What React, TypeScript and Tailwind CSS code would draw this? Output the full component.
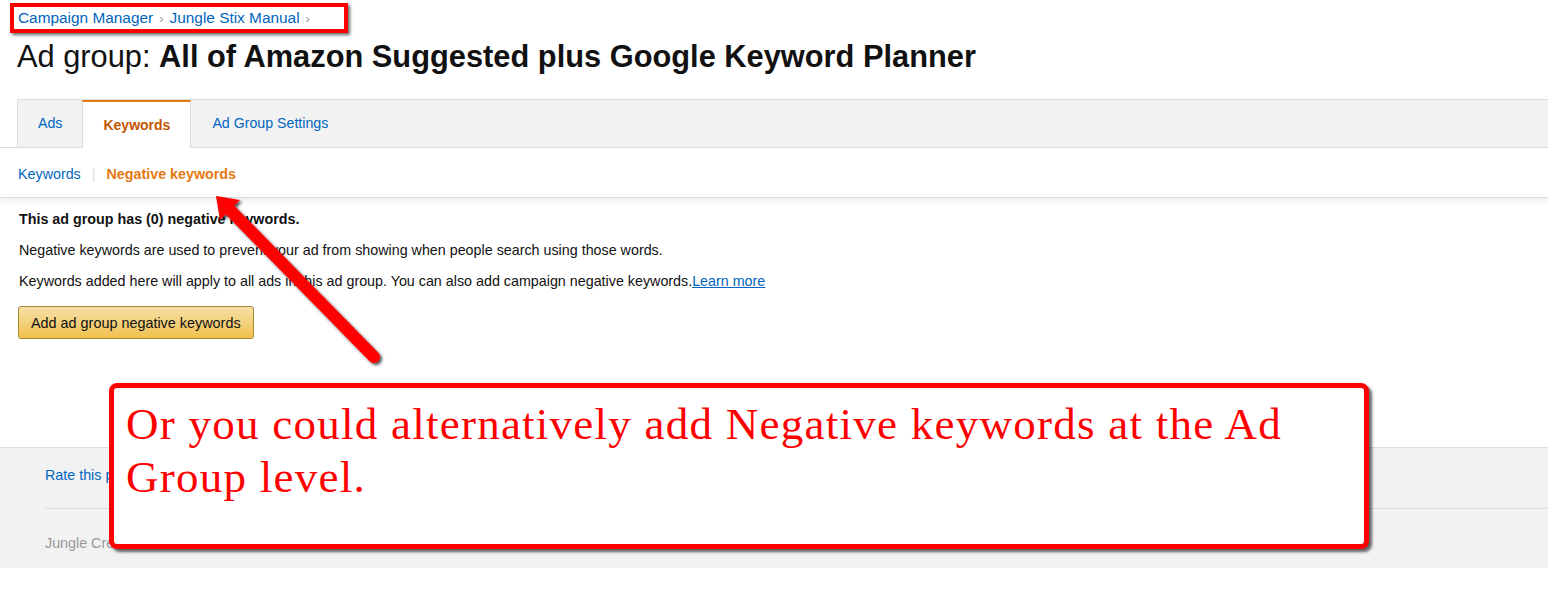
import { ReactNode } from 'react';

function Tab({ label, active, first }: { label: string; active?: boolean; first?: boolean }) {
  if (active) {
    return (
      <div className="h-[48px] -mb-px px-[20px] flex items-center bg-white border-x border-[#dddddd] border-t-2 border-t-[#e47911] text-[14px] font-bold text-[#c45500]">
        {label}
      </div>
    );
  }
  return (
    <div
      className={
        'h-[47px] px-[20px] flex items-center text-[14.2px] text-[#0066c0] ' +
        (first ? 'border-l border-[#dddddd]' : 'pl-[21px]')
      }
    >
      {label}
    </div>
  );
}

function Crumb({ children }: { children: ReactNode }) {
  return (
    <>
      <span className="text-[#0066c0]">{children}</span>
      <span className="text-[#999999] mx-[6px] text-[13px]">›</span>
    </>
  );
}

function App() {
  return (
    <div className="relative min-h-[614px] w-full bg-white font-['Liberation_Sans',Arial,sans-serif] text-[#111111] overflow-hidden">
      <div className="pt-[8px] pl-[18px] h-[28px] leading-[20px] text-[15.4px]">
        <Crumb>Campaign Manager</Crumb>
        <Crumb>Jungle Stix Manual</Crumb>
      </div>

      <h1 className="mt-[12px] pl-[17px] text-[30.8px] leading-[34px] text-[#111111]">
        Ad group: <span className="font-bold">All of Amazon Suggested plus Google Keyword Planner</span>
      </h1>

      <div className="mt-[25px] border-b border-[#dddddd]">
        <div className="ml-[17px] flex items-end bg-[#f2f2f2] border-t border-[#dddddd]">
          <Tab label="Ads" first />
          <Tab label="Keywords" active />
          <Tab label="Ad Group Settings" />
        </div>
      </div>

      <div className="h-[50px] pl-[18px] pt-[16px] leading-[20px] text-[14.3px] flex items-start border-b border-[#dddddd] shadow-[0_3px_6px_rgba(0,0,0,0.07)]">
        <span className="text-[#0066c0]">Keywords</span>
        <span className="mx-[11px] text-[#dddddd]">|</span>
        <span className="font-bold text-[#e47911]">Negative keywords</span>
      </div>

      <div className="pl-[19px] pt-[11px] text-[14.3px] leading-[20px]">
        <p className="font-bold">This ad group has (0) negative keywords.</p>
        <p className="mt-[11px]">Negative keywords are used to prevent your ad from showing when people search using those words.</p>
        <p className="mt-[11px]">
          Keywords added here will apply to all ads in this ad group. You can also add campaign negative keywords.
          <span className="text-[#0066c0] underline">Learn more</span>
        </p>
        <button className="mt-[15px] -ml-px h-[33px] px-[12px] rounded-[3px] border border-[#a88734] bg-gradient-to-b from-[#f7dfa5] to-[#f0c14b] text-[14.4px] text-[#111111]">
          Add ad group negative keywords
        </button>
      </div>

      <div className="mt-[108px] h-[121px] bg-[#f2f2f2] border-t border-[#dddddd] pl-[45px] text-[14.3px]">
        <div className="h-[61px] pt-[17px] leading-[20px] text-[#0066c0] border-b border-[#dddddd]">Rate this page</div>
        <div className="pt-[24px] leading-[20px] text-[#999999]">Jungle Creations</div>
      </div>

      {/* annotations */}
      <div className="absolute left-[10px] top-[3px] w-[338px] h-[30px] border-4 border-[#ff0000] shadow-[2px_2px_3px_rgba(0,0,0,0.6)]" />

      <svg className="absolute left-0 top-0 pointer-events-none" width="420" height="380" viewBox="0 0 420 380">
        <defs>
          <filter id="sh" x="-20%" y="-20%" width="140%" height="140%">
            <feDropShadow dx="2" dy="2" stdDeviation="1.5" floodColor="#000" floodOpacity="0.7" />
          </filter>
        </defs>
        <g filter="url(#sh)">
          <line x1="374" y1="357" x2="228" y2="208" stroke="#ff0000" strokeWidth="12" strokeLinecap="round" />
          <polygon points="216,196 240,200 220,220" fill="#ff0000" />
        </g>
      </svg>

      <div className="absolute left-[109px] top-[383px] w-[1260px] h-[166px] bg-white border-[5px] border-[#ff0000] rounded-[8px] shadow-[3px_3px_3px_rgba(0,0,0,0.6)] pl-[12px] pt-[10px]">
        <p className="font-['Liberation_Serif',Cambria,serif] text-[45px] tracking-[1.25px] leading-[53px] text-[#ff0000]">
          Or you could alternatively add Negative keywords at the Ad
          <br />
          Group level.
        </p>
      </div>
    </div>
  );
}

export default App;
